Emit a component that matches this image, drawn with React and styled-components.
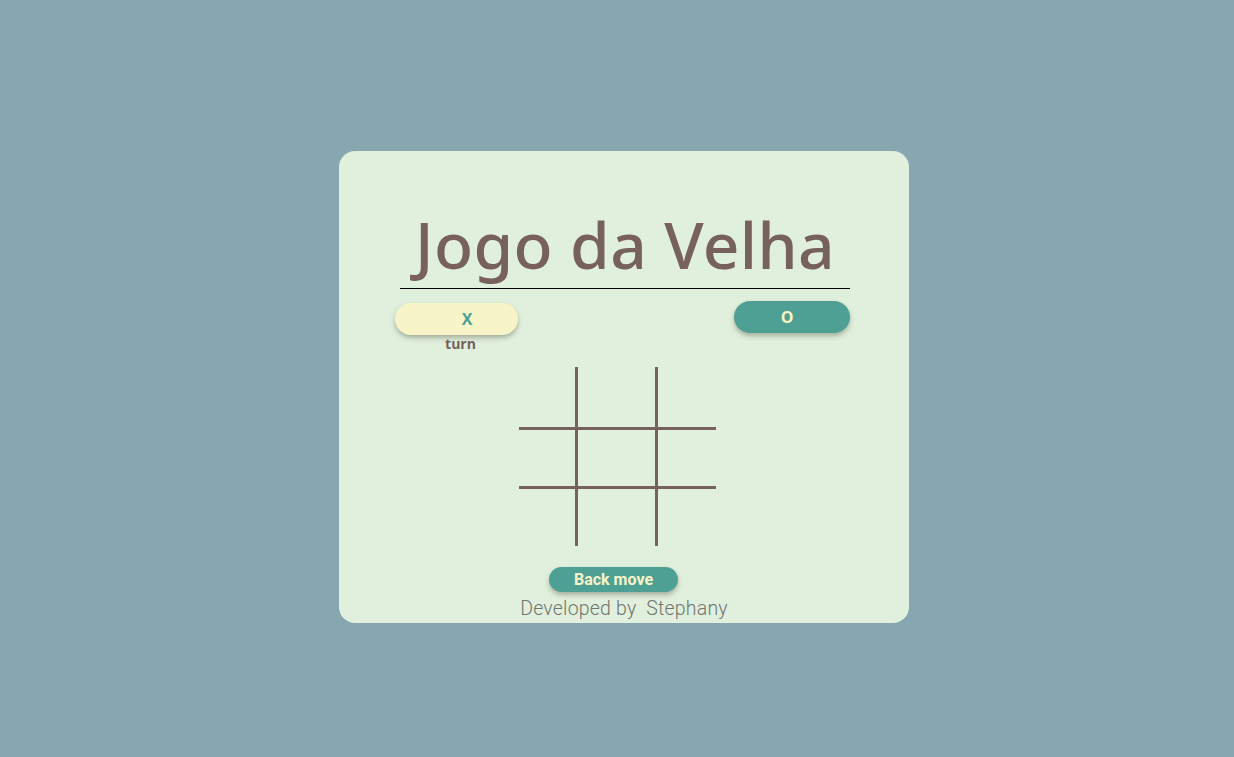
import React from "react";
import styled, { createGlobalStyle } from "styled-components";

const Global = createGlobalStyle`
  html, body { margin: 0; padding: 0; background: #87a7b0; }
  body { font-family: "Noto Sans", sans-serif; }
`;

const Page = styled.div`
  width: 1234px;
  height: 757px;
  box-sizing: border-box;
  padding: 151px 0 0 339px;
`;

const Card = styled.div`
  width: 570px;
  height: 472px;
  box-sizing: border-box;
  background: #e1f0dd;
  border-radius: 16px;
  display: flex;
  flex-direction: column;
  align-items: center;
  padding-top: 51px;
`;

const Title = styled.h1`
  margin: 0;
  width: 450px;
  margin-left: 2px;
  text-align: center;
  font-family: "Noto Sans", sans-serif;
  font-weight: 500;
  font-size: 64px;
  line-height: 86px;
  color: #76615d;
  border-bottom: 1px solid #000;
  letter-spacing: 0.4px;
`;

const Players = styled.div`
  width: 455px;
  margin-top: 12px;
  margin-right: 3px;
  display: flex;
  justify-content: space-between;
  align-items: flex-start;
`;

const PlayerCol = styled.div`
  display: flex;
  flex-direction: column;
  align-items: center;
  margin-top: ${(p) => p.$offset}px;
`;

const PlayerButton = styled.button`
  width: ${(p) => p.$w}px;
  height: 32px;
  border: none;
  border-radius: 16px;
  background: ${(p) => (p.$active ? "#f7f5c8" : "#4fa094")};
  color: ${(p) => (p.$active ? "#4fa094" : "#f7f5c8")};
  font-family: "Open Sans", sans-serif;
  font-weight: 700;
  font-size: 16px;
  box-shadow: 0 3px 5px rgba(60, 60, 40, 0.35);
  padding: ${(p) => p.$pad};
  cursor: pointer;
`;

const Turn = styled.span`
  font-family: "Open Sans", sans-serif;
  font-weight: 700;
  font-size: 14px;
  line-height: 16px;
  color: #76615d;
  margin-left: 8px;
  margin-top: 1px;
`;

const Board = styled.div`
  margin-top: 15px;
  margin-left: -14px;
  display: grid;
  grid-template-columns: 59px 80px 58px;
  grid-template-rows: 63px 59px 57px;
`;

const Cell = styled.div`
  box-sizing: border-box;
  border-right: ${(p) => (p.$right ? "3px solid #76615d" : "none")};
  border-bottom: ${(p) => (p.$bottom ? "3px solid #76615d" : "none")};
`;

const BackButton = styled.button`
  margin-top: 21px;
  margin-left: -21px;
  width: 129px;
  height: 25px;
  border: none;
  border-radius: 13px;
  background: #4fa094;
  color: #f7f5c8;
  font-family: "Roboto", sans-serif;
  font-weight: 700;
  font-size: 16px;
  padding: 0;
  box-shadow: 0 3px 5px rgba(60, 60, 40, 0.35);
  cursor: pointer;
`;

const Footer = styled.div`
  margin-top: 6px;
  font-family: "Roboto", sans-serif;
  font-weight: 300;
  font-size: 19.5px;
  line-height: 22px;
  letter-spacing: 0.2px;
  color: #707570;
  white-space: pre;
`;

export default function App() {
  const cells = [];
  for (let r = 0; r < 3; r++) {
    for (let c = 0; c < 3; c++) {
      cells.push(<Cell key={`${r}-${c}`} $right={c < 2} $bottom={r < 2} />);
    }
  }
  return (
    <>
      <Global />
      <Page>
        <Card>
          <Title>Jogo da Velha</Title>
          <Players>
            <PlayerCol $offset={2}>
              <PlayerButton $active $w={123} $pad="0 0 0 21px">X</PlayerButton>
              <Turn>turn</Turn>
            </PlayerCol>
            <PlayerCol $offset={0}>
              <PlayerButton $w={116} $pad="0 10px 0 0">O</PlayerButton>
            </PlayerCol>
          </Players>
          <Board>{cells}</Board>
          <BackButton>Back move</BackButton>
          <Footer>Developed by  Stephany</Footer>
        </Card>
      </Page>
    </>
  );
}
